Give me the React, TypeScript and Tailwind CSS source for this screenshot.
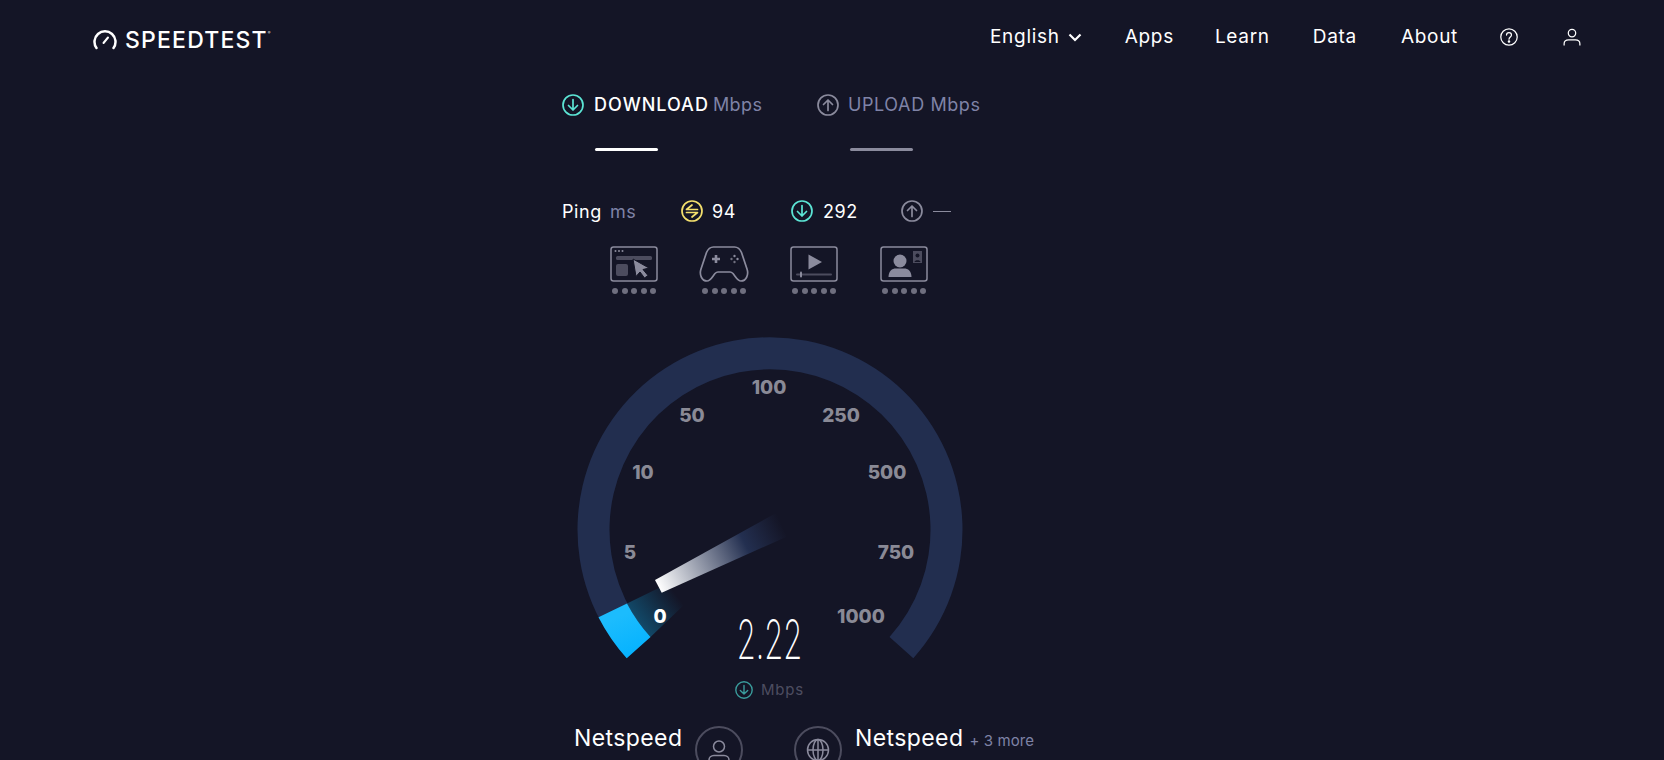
const font = { fontFamily: "Inter, 'Liberation Sans', sans-serif" };

function CircleIcon({ color, dir, size = 22 }: { color: string; dir: "down" | "up" | "ping"; size?: number }) {
  return (
    <svg width={size} height={size} viewBox="0 0 22 22" fill="none" stroke={color} strokeWidth="1.7" strokeLinecap="round" strokeLinejoin="round" className="shrink-0">
      <circle cx="11" cy="11" r="10" />
      {dir === "down" && <path d="M11 5.500v10.500M6.500 11.500l4.500 4.500 4.500-4.500" />}
      {dir === "up" && <path d="M11 16.500V6M6.500 10.500L11 6l4.500 4.500" />}
      {dir === "ping" && <path d="M16.500 9.500H5.500l5.500-4.500M5.500 12.500H16.500l-5.500 4.500" />}
    </svg>
  );
}

function Dots() {
  return (
    <div className="mt-[6px] flex justify-center gap-[3.500px]">
      {[0, 1, 2, 3, 4].map((i) => (
        <span key={i} className="h-[6px] w-[6px] rounded-full bg-[#6f6f7f]" />
      ))}
    </div>
  );
}

function BrowserIcon() {
  return (
    <svg width="48" height="36" viewBox="0 0 48 36" fill="none">
      <rect x="1" y="1" width="46" height="34" rx="2.500" stroke="#8b8b9d" strokeWidth="1.500" />
      <circle cx="5.500" cy="5" r="1" fill="#8b8b9d" />
      <circle cx="9" cy="5" r="1" fill="#8b8b9d" />
      <circle cx="12.500" cy="5" r="1" fill="#8b8b9d" />
      <rect x="6" y="10" width="36" height="4" rx="1.500" fill="#4c4c5e" />
      <rect x="6" y="18" width="12" height="12" rx="2" fill="#4c4c5e" />
      <path d="M23 13l16 9-6 1.500 5 6-3.500 2.500-4.500-6-4 4.500z" fill="#8b8b9d" stroke="#141526" strokeWidth="1" />
    </svg>
  );
}

function GameIcon() {
  return (
    <svg width="50" height="36" viewBox="0 0 50 36" fill="none">
      <path
        d="M14.500 1H35.500C39 1 41 3 42.500 6.500L48 23C50 29 47 35 42 35C38.500 35 36.500 30.500 34 27.500C33 26.500 32 26 31 26H19C18 26 17 26.500 16 27.500C13.500 30.500 11.500 35 8 35C3 35 0 29 2 23L7.500 6.500C9 3 11 1 14.500 1Z"
        stroke="#8b8b9d"
        strokeWidth="1.700"
      />
      <path d="M17 9v8M13 13h8" stroke="#8b8b9d" strokeWidth="2.600" />
      <circle cx="35.500" cy="10" r="1.200" fill="#8b8b9d" />
      <circle cx="35.500" cy="16" r="1.200" fill="#6f6f7f" />
      <circle cx="32.500" cy="13" r="1.200" fill="#6f6f7f" />
      <circle cx="38.500" cy="13" r="1.200" fill="#8b8b9d" />
    </svg>
  );
}

function VideoIcon() {
  return (
    <svg width="48" height="36" viewBox="0 0 48 36" fill="none">
      <rect x="1" y="1" width="46" height="34" rx="2.500" stroke="#8b8b9d" strokeWidth="1.500" />
      <path d="M18.500 8.500L32 16L18.500 23.500Z" fill="#8b8b9d" />
      <rect x="6" y="27.500" width="36" height="2" rx="1" fill="#4c4c5e" />
      <rect x="10" y="25.500" width="2" height="6" rx="1" fill="#8b8b9d" />
    </svg>
  );
}

function PersonIcon() {
  return (
    <svg width="48" height="36" viewBox="0 0 48 36" fill="none">
      <rect x="1" y="1" width="46" height="34" rx="2.500" stroke="#8b8b9d" strokeWidth="1.500" />
      <circle cx="20" cy="15" r="6.500" fill="#8b8b9d" />
      <path d="M8.500 31C8.500 25 12 22.500 16 22.500H24C28 22.500 31.500 25 31.500 31Z" fill="#8b8b9d" />
      <rect x="33" y="5" width="9" height="12" fill="#4c4c5e" />
      <circle cx="37.500" cy="9.500" r="2" fill="#141526" />
      <path d="M34.500 16C34.500 13.500 40.500 13.500 40.500 16Z" fill="#141526" />
    </svg>
  );
}

function Gauge() {
  const labels: [string, number, number, string][] = [
    ["100", 192, 50, "#8a8a96"],
    ["50", 115, 78, "#8a8a96"],
    ["250", 264, 78, "#8a8a96"],
    ["10", 66, 135, "#8a8a96"],
    ["500", 310, 135, "#8a8a96"],
    ["5", 53, 215, "#8a8a96"],
    ["750", 319, 215, "#8a8a96"],
    ["0", 83, 279, "#ffffff"],
    ["1000", 284, 279, "#8a8a96"],
  ];
  return (
    <svg width="386" height="340" viewBox="0 0 386 340" fill="none" className="block">
      <defs>
        <linearGradient id="needle" gradientUnits="userSpaceOnUse" x1="81" y1="249" x2="205" y2="188">
          <stop offset="0" stopColor="#ffffff" />
          <stop offset="0.7" stopColor="#232f50" />
          <stop offset="1" stopColor="#232f50" stopOpacity="0" />
        </linearGradient>
        <linearGradient id="blue" gradientUnits="userSpaceOnUse" x1="30" y1="285" x2="50" y2="328">
          <stop offset="0" stopColor="#1cbcfd" />
          <stop offset="1" stopColor="#02b1ff" />
        </linearGradient>
        <linearGradient id="glow" gradientUnits="userSpaceOnUse" x1="60" y1="284" x2="98" y2="256">
          <stop offset="0" stopColor="#0f7fae" stopOpacity="0.5" />
          <stop offset="1" stopColor="#0f7fae" stopOpacity="0" />
        </linearGradient>
      </defs>
      {/* ring, centre 193,193 */}
      <path d="M49.700 321.300A192.500 192.500 0 1 1 336.300 321.300L312.500 300A160.500 160.500 0 1 0 73.500 300Z" fill="#222e4f" />
      {/* blue arc at the start */}
      <path d="M49.700 321.300A192.500 192.500 0 0 1 21.500 280.300L50 266.500A160.500 160.500 0 0 0 73.500 300Z" fill="url(#blue)" />
      <path d="M50 266.500L90 247L110 265L73.500 300A160.500 160.500 0 0 1 50 266.500Z" fill="url(#glow)" />
      <path d="M78 243L84.700 255.700L209.700 199.700L199.700 175.700Z" fill="url(#needle)" />
      {labels.map(([t, x, y, c]) => (
        <text key={t} x={x} y={y} fill={c} textAnchor="middle" dominantBaseline="central" fontSize="19" fontWeight="800" style={font}>
          {t}
        </text>
      ))}
    </svg>
  );
}

export default function App() {
  return (
    <div className="h-screen overflow-hidden bg-[#141526] text-white" style={font}>
      <header className="flex h-[72px] items-center justify-between pl-[93px] pr-[83px]">
        <div className="mt-[8px] flex items-center gap-[8px]">
          <svg width="24" height="20" viewBox="0 0 24 20" fill="none" stroke="#fff" strokeWidth="2.500" strokeLinecap="round">
            <path d="M3.500 18A10.500 10.500 0 1 1 20.500 18" />
            <path d="M10.500 13L15 7.500" strokeWidth="2" />
          </svg>
          <span className="text-[23px] font-[550] leading-none tracking-[1.200px]">SPEEDTEST</span>
          <span className="-ml-[8px] -mt-[14px] text-[4px] leading-none">®</span>
        </div>
        <nav className="mt-[2px] flex items-center text-[19px] tracking-[0.7px]">
          <span>English</span>
          <svg width="14" height="9" viewBox="0 0 14 9" fill="none" stroke="#fff" strokeWidth="2.200" className="ml-[8px]">
            <path d="M1.500 1.500L7 7l5.500-5.500" />
          </svg>
          <span className="ml-[43px]">Apps</span>
          <span className="ml-[41px]">Learn</span>
          <span className="ml-[43px]">Data</span>
          <span className="ml-[44px]">About</span>
          <svg width="18" height="18" viewBox="0 0 16 16" fill="none" stroke="#fff" strokeWidth="1.100" className="ml-[42px]">
            <circle cx="8" cy="8" r="7.300" />
            <path d="M5.800 6.300C5.800 3.500 10.200 3.500 10.200 6.300C10.200 8 8 8 8 10" strokeLinecap="round" />
            <circle cx="8" cy="12" r=".6" fill="#fff" />
          </svg>
          <svg width="18" height="18" viewBox="0 0 16 16" fill="none" stroke="#fff" strokeWidth="1.100" className="ml-[45px]">
            <circle cx="8" cy="4.500" r="3.300" />
            <path d="M1 15.500V14C1 11.500 3 10.500 5 10.500H11C13 10.500 15 11.500 15 14V15.500" />
          </svg>
        </nav>
      </header>

      <main className="flex flex-col pl-[562px]">
        <div className="mt-[22px] flex">
          <div className="w-[255px]">
            <div className="flex items-center gap-[10px] text-[18px] leading-[22px]">
              <CircleIcon color="#5ce5d5" dir="down" />
              <span className="font-medium tracking-[1px]">DOWNLOAD</span>
              <span className="-ml-[6px] tracking-[0.4px] text-[#7f83a6]">Mbps</span>
            </div>
            <div className="ml-[33px] mt-[32px] h-[3px] w-[63px] rounded-sm bg-white" />
          </div>
          <div>
            <div className="flex items-center gap-[9px] text-[18px] leading-[22px] text-[#7f83a6]">
              <CircleIcon color="#8b8b9d" dir="up" />
              <span className="tracking-[0.6px]">UPLOAD Mbps</span>
            </div>
            <div className="ml-[33px] mt-[32px] h-[3px] w-[63px] rounded-sm bg-[#8b8b9d]" />
          </div>
        </div>

        <div className="mt-[49px] flex h-[22px] items-center text-[18px] tracking-[0.6px]">
          <span className="w-[48px]">Ping</span>
          <span className="w-[71px] text-[#7f83a6]">ms</span>
          <CircleIcon color="#f4e06d" dir="ping" />
          <span className="ml-[9px] w-[79px]">94</span>
          <CircleIcon color="#5ce5d5" dir="down" />
          <span className="ml-[10px] w-[78px]">292</span>
          <CircleIcon color="#8b8b9d" dir="up" />
          <span className="ml-[10px] h-px w-[18px] bg-[#8b8b9d]" />
        </div>

        <div className="ml-[48px] mt-[24px] flex">
          <div className="w-[89px]">
            <div className="w-[48px]">
              <BrowserIcon />
              <Dots />
            </div>
          </div>
          <div className="w-[91px]">
            <div className="w-[50px]">
              <GameIcon />
              <Dots />
            </div>
          </div>
          <div className="w-[90px]">
            <div className="w-[48px]">
              <VideoIcon />
              <Dots />
            </div>
          </div>
          <div className="w-[48px]">
            <PersonIcon />
            <Dots />
          </div>
        </div>

        <div className="relative ml-[15px] mt-[43px] h-[387px] w-[386px]">
          <Gauge />
          <div className="absolute left-0 top-[273px] flex w-[386px] justify-center">
            <span className="block origin-center -translate-x-px scale-x-[0.57] text-[54px] font-[150] leading-[60px]">2.22</span>
          </div>
          <div className="absolute left-[158px] top-[344px] flex items-center gap-[8px] text-[15px] leading-[18px] tracking-[0.8px] text-[#4d4d60]">
            <CircleIcon color="#3a9c9c" dir="down" size={18} />
            <span>Mbps</span>
          </div>
        </div>

        <div className="flex items-start">
          <span className="ml-[12px] w-[121px] text-[23px] leading-[28px] tracking-[0.4px]">Netspeed</span>
          <div className="mt-[2px] flex h-[48px] w-[48px] shrink-0 items-center justify-center rounded-full border-2 border-[#4c4c5e]">
            <svg width="22" height="26" viewBox="0 0 22 26" fill="none" stroke="#8b8b9d" strokeWidth="1.500" className="mt-[5px]">
              <circle cx="11" cy="6.500" r="5.500" />
              <path d="M1 23V20C1 17.500 3 15.500 6 15.500H16C19 15.500 21 17.500 21 20V23" />
            </svg>
          </div>
          <div className="ml-[51px] mt-[2px] flex h-[48px] w-[48px] shrink-0 items-center justify-center rounded-full border-2 border-[#4c4c5e]">
            <svg width="24" height="24" viewBox="0 0 24 24" fill="none" stroke="#8b8b9d" strokeWidth="1.500">
              <circle cx="12" cy="12" r="10.500" />
              <ellipse cx="12" cy="12" rx="5" ry="10.500" />
              <path d="M1.500 12h21M12 1.500v21" />
            </svg>
          </div>
          <span className="ml-[13px] text-[23px] leading-[28px] tracking-[0.4px]">Netspeed</span>
          <span className="ml-[6px] mt-[5px] text-[15px] leading-[24px] tracking-[0.1px] text-[#7f83a6]">+ 3 more</span>
        </div>
      </main>
    </div>
  );
}
